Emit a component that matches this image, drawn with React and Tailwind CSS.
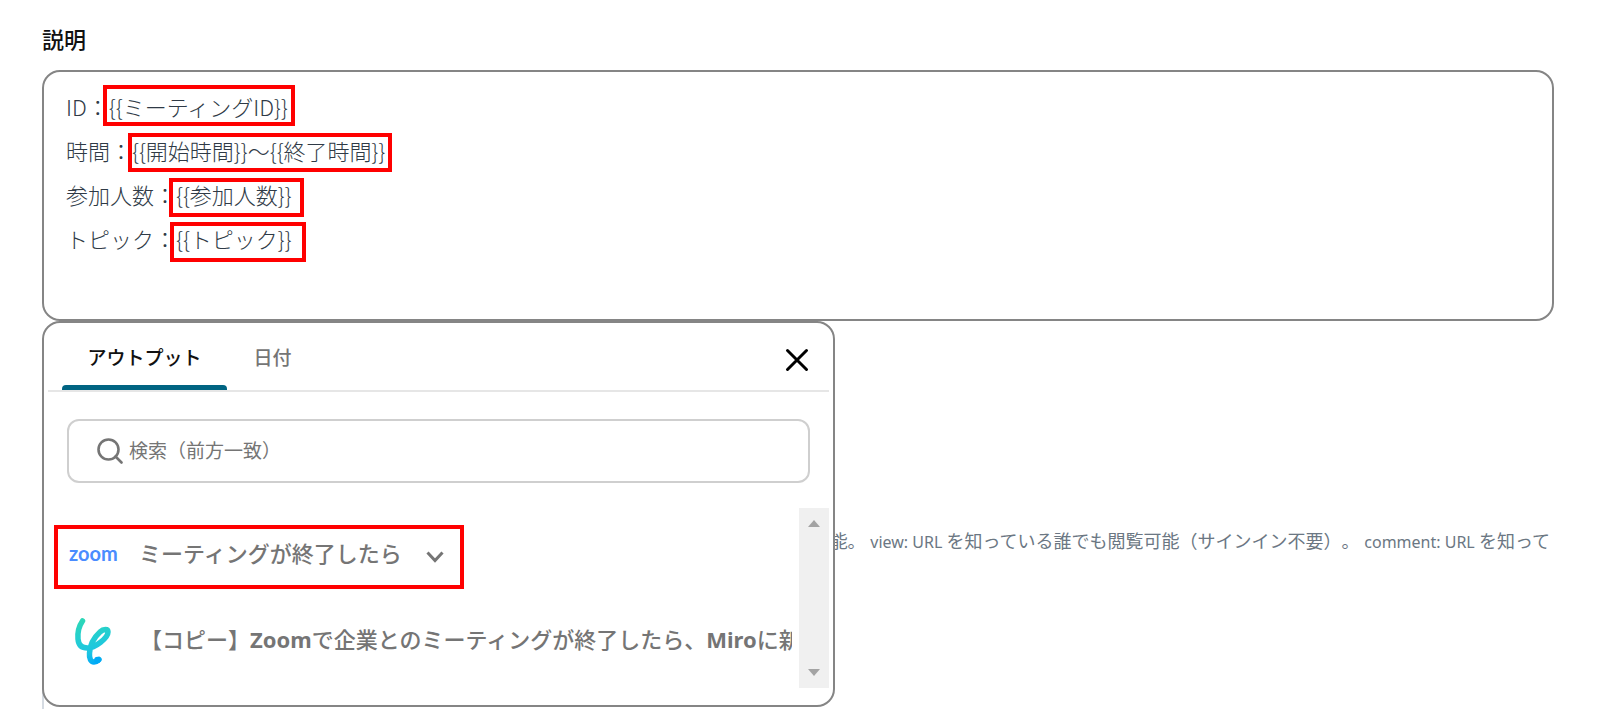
import React, { useState } from 'react';

const DESCRIPTION = [
  'ID：{{ミーティングID}}',
  '時間：{{開始時間}}～{{終了時間}}',
  '参加人数：{{参加人数}}',
  'トピック：{{トピック}}'
].join('\n');

const Highlight = ({ className }) => (
  <div className={`pointer-events-none absolute border-4 border-[#ff0000] ${className}`} />
);

const SearchIcon = () => (
  <svg viewBox="0 0 26 26" className="h-[26px] w-[26px] shrink-0" fill="none" stroke="#757575" strokeWidth="2.6">
    <circle cx="11.5" cy="11.5" r="10" />
    <path d="M18.5 18.5 24.5 24.5" strokeLinecap="round" />
  </svg>
);

const YoomLogo = () => (
  <svg viewBox="0 0 38 48" className="h-12 w-[38px] shrink-0" fill="none">
    <defs>
      <linearGradient id="yoom" x1="8" y1="0" x2="20" y2="48" gradientUnits="userSpaceOnUse">
        <stop offset="0" stopColor="#2ed8b4" />
        <stop offset="0.5" stopColor="#22ccd6" />
        <stop offset="0.75" stopColor="#1cc4e2" />
        <stop offset="1" stopColor="#00a8f8" />
      </linearGradient>
    </defs>
    <path
      d="M8.5 4C5 9 3.5 16 4 22C4.500 28 8 31 13.500 31C21 31 34 21 34 15C34 11.500 29.500 11.500 26 15C20.500 20 16 28 15.500 36C15 42 17 45 20 45C22 45 23.500 44 25 42.500"
      stroke="url(#yoom)"
      strokeWidth="5.5"
      strokeLinecap="round"
      strokeLinejoin="round"
    />
    <circle cx="23.500" cy="43" r="3.300" fill="#00aaf6" />
  </svg>
);

const Scrollbar = () => (
  <div className="flex w-[30px] shrink-0 flex-col items-center justify-between bg-[#f0f0f0] py-3">
    <svg viewBox="0 0 12 7" className="h-[7px] w-3" fill="#a3a3a3">
      <path d="M0 7 6 0l6 7z" />
    </svg>
    <svg viewBox="0 0 12 7" className="h-[7px] w-3" fill="#a3a3a3">
      <path d="M0 0h12L6 7z" />
    </svg>
  </div>
);

const TABS = [
  { id: 'output', label: 'アウトプット', width: 'w-[165px]' },
  { id: 'date', label: '日付', width: 'w-[91px]' }
];

const OutputPanel = () => {
  const [tab, setTab] = useState('output');
  const [query, setQuery] = useState('');

  return (
    <div className="absolute left-0 top-0 w-[793px] rounded-[18px] border-2 border-[#858585] bg-white px-1 pb-[17px]">
      <div className="flex h-[69px] items-stretch justify-between border-b-2 border-[#e6e6e6] pl-[14px] pr-5">
        <div className="flex" role="tablist">
          {TABS.map(({ id, label, width }) => (
            <button
              key={id}
              type="button"
              role="tab"
              aria-selected={tab === id}
              onClick={() => setTab(id)}
              className={`flex flex-col items-center text-[19px] font-medium ${width} ${tab === id ? 'text-[#111111]' : 'text-[#757575]'}`}
            >
              <span className="flex flex-1 items-center pt-2">{label}</span>
              <span className={`h-[5px] w-full rounded-t-[4px] ${tab === id ? 'bg-[#006482]' : 'bg-transparent'}`} />
            </button>
          ))}
        </div>
        <button type="button" aria-label="閉じる" className="pt-[6px]">
          <svg viewBox="0 0 24 24" className="h-6 w-6" fill="none" stroke="#000000" strokeWidth="3" strokeLinecap="round">
            <path d="M2.500 2.500 21.500 21.500M21.500 2.500 2.500 21.500" />
          </svg>
        </button>
      </div>

      <div className="px-[19px] pt-[27px]">
        <label className="flex h-16 items-center gap-[6px] rounded-[12px] border-2 border-[#cfcfcf] pl-7">
          <SearchIcon />
          <input
            type="text"
            value={query}
            onChange={(e) => setQuery(e.target.value)}
            placeholder="検索（前方一致）"
            aria-label="検索（前方一致）"
            className="w-full bg-transparent text-[19px] outline-none placeholder:text-[#757575]"
          />
        </label>
      </div>

      <div className="mt-[25px] flex h-[180px]">
        <div className="min-w-0 flex-1 pr-[7px] pt-[17px]">
          <div className="relative">
            <button type="button" className="flex h-16 items-center pb-2 pl-[21px] text-[#757575]">
              <span className="w-[70px] text-left font-['Lato'] text-[20px] font-bold leading-none text-[#4a8cff]">zoom</span>
              <span className="text-[22px] font-medium">ミーティングが終了したら</span>
              <svg viewBox="0 0 18 12" className="ml-6 mt-2 h-3 w-[18px]" fill="none" stroke="#757575" strokeWidth="3">
                <path d="M1.500 1.500 9 9.500l7.500-8" />
              </svg>
            </button>
            <Highlight className="left-[6px] top-0 h-16 w-[410px]" />
          </div>
          <div className="mt-7 flex items-center overflow-hidden pl-[26px] text-[#757575]">
            <YoomLogo />
            <span className="ml-[28px] whitespace-nowrap pb-1 text-[22px] font-medium">
              【コピー】<span className="font-bold">Zoom</span>で企業とのミーティングが終了したら、
              <span className="font-bold">Miro</span>に新
            </span>
          </div>
        </div>
        <Scrollbar />
      </div>
    </div>
  );
};

const App = () => {
  const [description, setDescription] = useState(DESCRIPTION);

  return (
    <main className="flex h-screen flex-col overflow-hidden bg-white pl-[42px] pr-[46px] pt-6 font-['Noto_Sans','Noto_Sans_CJK_JP',sans-serif]">
      <label htmlFor="description" className="block h-[46px] shrink-0 text-[22px] font-medium leading-[30px] text-[#111111]">
        説明
      </label>
      <div className="relative shrink-0">
        <textarea
          id="description"
          value={description}
          onChange={(e) => setDescription(e.target.value)}
          className="block h-[251px] w-full resize-none rounded-[18px] border-2 border-[#858585] bg-white px-[22px] py-3 font-['Noto_Sans_CJK_JP',sans-serif] text-[22px] font-light leading-[44px] text-[#2f3a46] outline-none"
        />
        <Highlight className="left-[61px] top-[15px] h-[41px] w-[192px]" />
        <Highlight className="left-[86px] top-[63px] h-[39px] w-[264px]" />
        <Highlight className="left-[127px] top-[108px] h-[39px] w-[135px]" />
        <Highlight className="left-[128px] top-[152px] h-[40px] w-[136px]" />
      </div>

      <div className="relative flex flex-1 flex-col pt-[206px]">
        <p className="overflow-hidden text-right whitespace-nowrap pr-1 text-[18px] leading-7 text-[#6b7783] [text-spacing-trim:space-all]">
          能。 <span className="text-[16px]">view: URL </span>
          を知っている誰でも閲覧可能（サインイン不要）。 <span className="text-[16px]">comment: URL </span>
          を知って
        </p>
        <div className="flex-1 border-l-2 border-[#d5dbe2]" />
        <OutputPanel />
      </div>
    </main>
  );
};

export default App;
